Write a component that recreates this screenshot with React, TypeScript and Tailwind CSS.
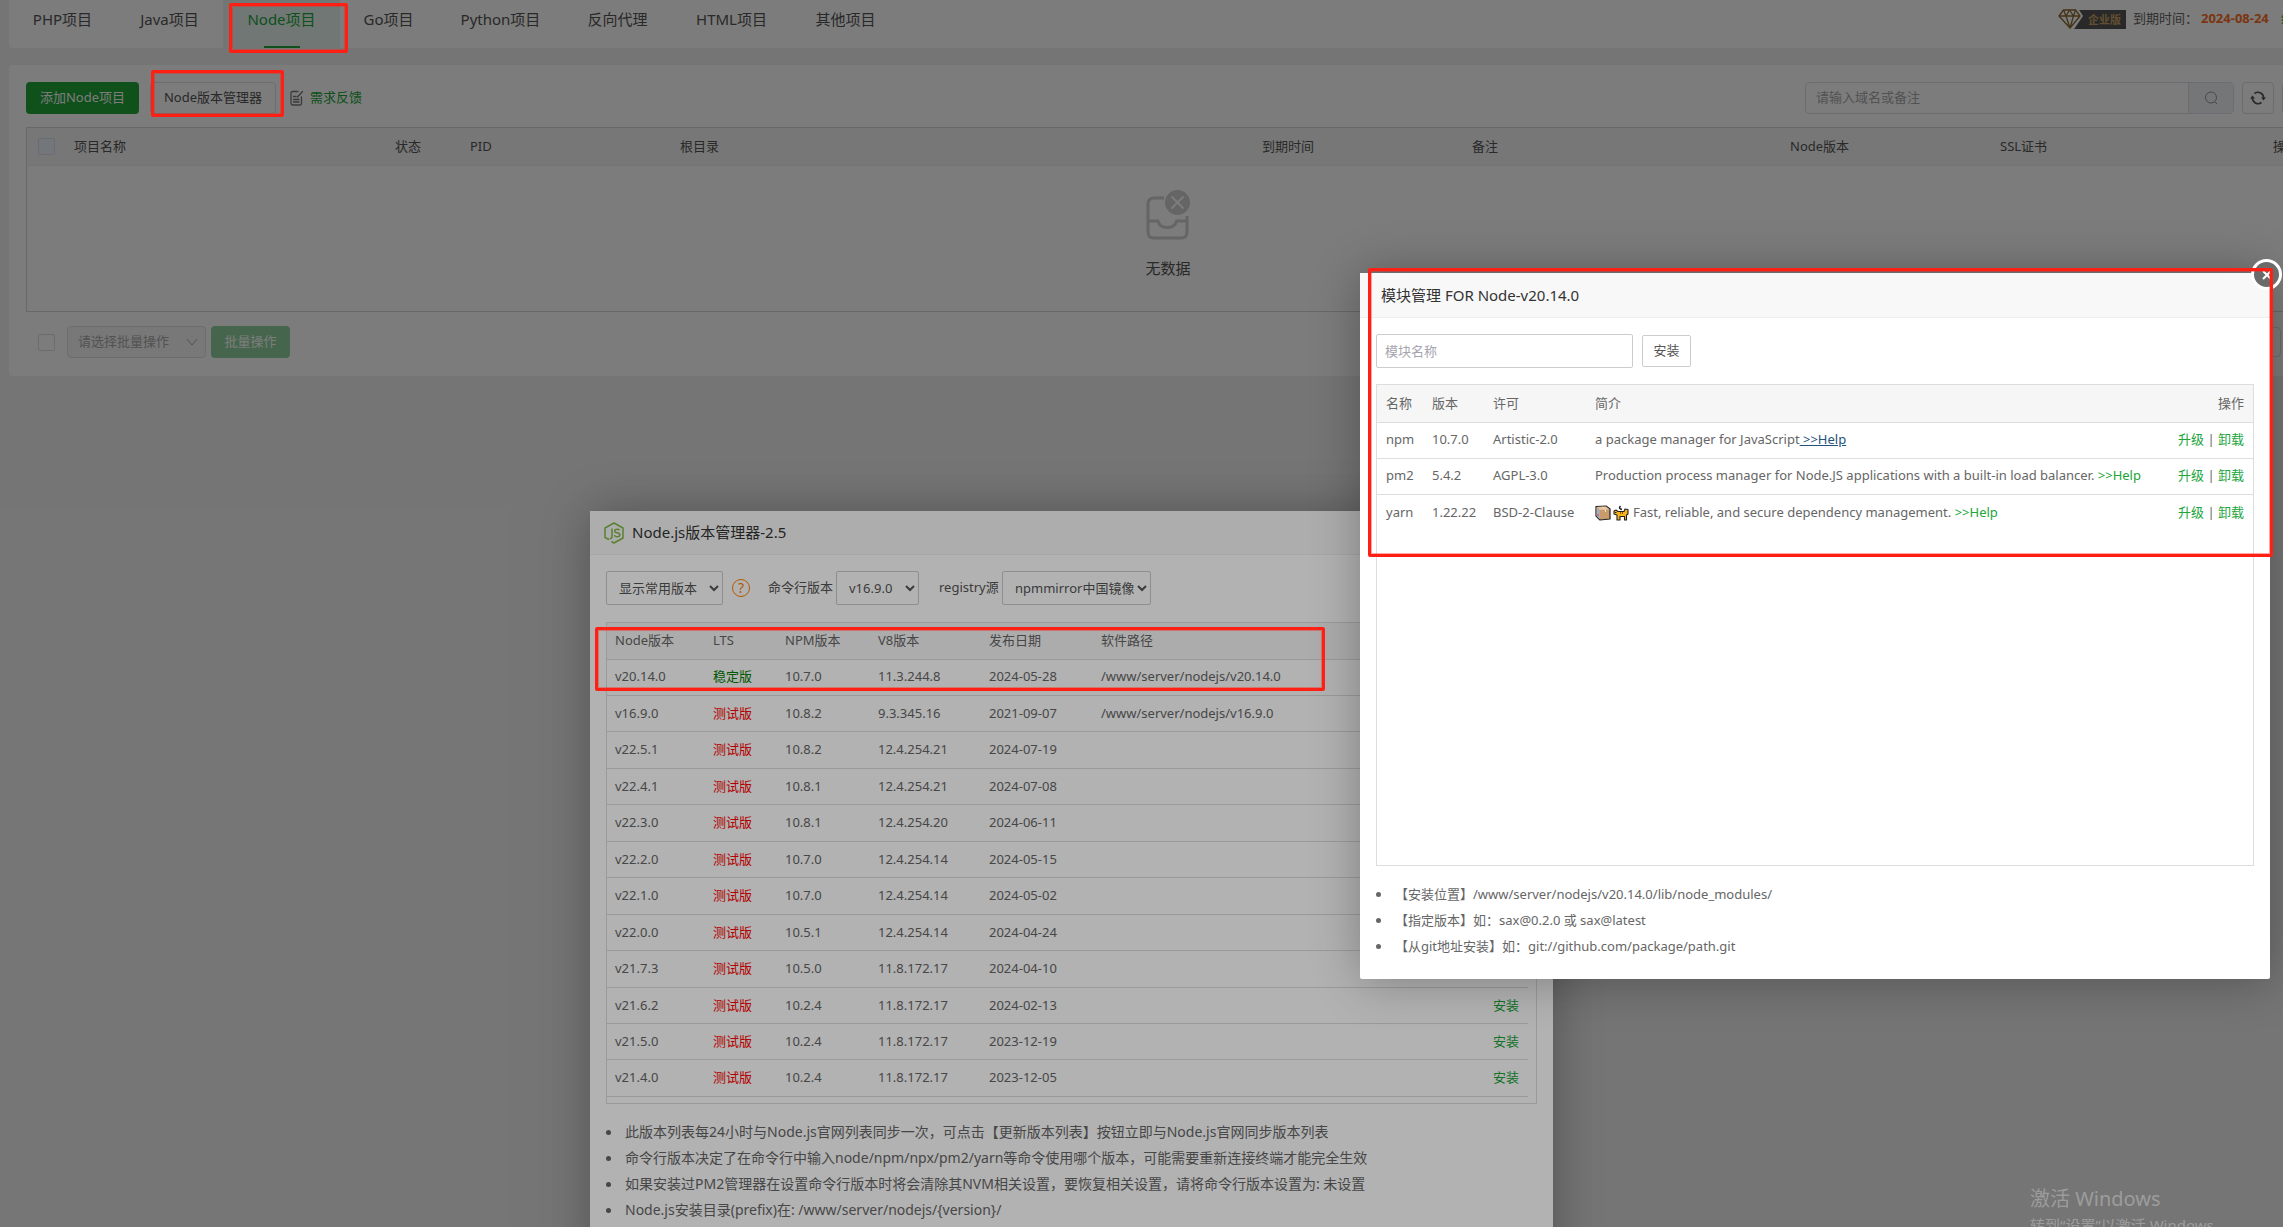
const tabs = [
  { name: 'PHP项目', w: 'w-[107px]' },
  { name: 'Java项目', w: 'w-[107px]' },
  { name: 'Node项目', w: 'w-[117px]', active: true },
  { name: 'Go项目', w: 'w-[97px]' },
  { name: 'Python项目', w: 'w-[127px]' },
  { name: '反向代理', w: 'w-[107px]' },
  { name: 'HTML项目', w: 'w-[121px]' },
  { name: '其他项目', w: 'w-[107px]' },
]

const versions = [
  { v: 'v20.14.0', lts: true, npm: '10.7.0', v8: '11.3.244.8', date: '2024-05-28', path: '/www/server/nodejs/v20.14.0', installed: true },
  { v: 'v16.9.0', npm: '10.8.2', v8: '9.3.345.16', date: '2021-09-07', path: '/www/server/nodejs/v16.9.0', installed: true },
  { v: 'v22.5.1', npm: '10.8.2', v8: '12.4.254.21', date: '2024-07-19' },
  { v: 'v22.4.1', npm: '10.8.1', v8: '12.4.254.21', date: '2024-07-08' },
  { v: 'v22.3.0', npm: '10.8.1', v8: '12.4.254.20', date: '2024-06-11' },
  { v: 'v22.2.0', npm: '10.7.0', v8: '12.4.254.14', date: '2024-05-15' },
  { v: 'v22.1.0', npm: '10.7.0', v8: '12.4.254.14', date: '2024-05-02' },
  { v: 'v22.0.0', npm: '10.5.1', v8: '12.4.254.14', date: '2024-04-24' },
  { v: 'v21.7.3', npm: '10.5.0', v8: '11.8.172.17', date: '2024-04-10' },
  { v: 'v21.6.2', npm: '10.2.4', v8: '11.8.172.17', date: '2024-02-13' },
  { v: 'v21.5.0', npm: '10.2.4', v8: '11.8.172.17', date: '2023-12-19' },
  { v: 'v21.4.0', npm: '10.2.4', v8: '11.8.172.17', date: '2023-12-05' },
]

const modules = [
  { name: 'npm', version: '10.7.0', license: 'Artistic-2.0', desc: 'a package manager for JavaScript', hover: true },
  { name: 'pm2', version: '5.4.2', license: 'AGPL-3.0', desc: 'Production process manager for Node.JS applications with a built-in load balancer.' },
  { name: 'yarn', version: '1.22.22', license: 'BSD-2-Clause', desc: 'Fast, reliable, and secure dependency management.', emoji: true },
]

const managerNotes = [
  '此版本列表每24小时与Node.js官网列表同步一次，可点击【更新版本列表】按钮立即与Node.js官网同步版本列表',
  '命令行版本决定了在命令行中输入node/npm/npx/pm2/yarn等命令使用哪个版本，可能需要重新连接终端才能完全生效',
  '如果安装过PM2管理器在设置命令行版本时将会清除其NVM相关设置，要恢复相关设置，请将命令行版本设置为: 未设置',
  'Node.js安装目录(prefix)在: /www/server/nodejs/{version}/',
]

const moduleNotes = [
  '【安装位置】/www/server/nodejs/v20.14.0/lib/node_modules/',
  '【指定版本】如：sax@0.2.0 或 sax@latest',
  '【从git地址安装】如：git://github.com/package/path.git',
]

function DiamondIcon() {
  return (
    <svg viewBox="0 0 26 20" className="relative h-5 w-[26px]" fill="none" stroke="#8a6a2e" strokeWidth="1.3" strokeLinejoin="round">
      <path d="M15 0H20.500L25 7L16.500 19.500H12Z" fill="#fff" stroke="none" />
      <path d="M5.500 1H17.500L22 7L12 19L1 7Z" />
      <path d="M1 7H22M5.500 1L8 7L12 19M17.500 1L15.500 7L12 19M8 7L11.500 1L15.500 7" />
    </svg>
  )
}

function EmptyIcon() {
  return (
    <svg viewBox="0 0 46 50" className="h-[50px] w-[46px]" fill="none" stroke="#d0d0d0" strokeWidth="3" strokeLinejoin="round">
      <path d="M19 8H9Q3 8 3 14V42Q3 48 9 48H36Q42 48 42 42V26" />
      <path d="M3 31H13Q14.500 37.500 22.500 37.500Q30 37.500 31.500 31H42" />
      <circle cx="32.500" cy="12.500" r="12.500" fill="#d0d0d0" stroke="none" />
      <path d="M26.500 6.500L38.500 18.500M38.500 6.500L26.500 18.500" stroke="#fff" strokeWidth="2" />
    </svg>
  )
}

function FeedbackIcon() {
  return (
    <svg viewBox="0 0 14 16" className="ml-3.5 h-4 w-3.5" fill="none" stroke="#777" strokeWidth="1.3" strokeLinecap="round">
      <path d="M8 1.500H2.500Q1 1.500 1 3V13.500Q1 15 2.500 15H10Q11.500 15 11.500 13.500V7" />
      <path d="M3.500 6.500H6M3.500 9.500H9M3.500 12H9M7.500 7L12.500 1.500" />
    </svg>
  )
}

function SearchIcon() {
  return (
    <svg viewBox="0 0 14 14" className="h-3.5 w-3.5" fill="none" stroke="#909399" strokeWidth="1">
      <circle cx="7" cy="6.500" r="5.500" />
      <path d="M10.500 10.500L13 13" />
    </svg>
  )
}

function RefreshIcon() {
  return (
    <svg viewBox="0 0 16 14" className="h-3.5 w-4" fill="none" stroke="#555" strokeWidth="1.6">
      <path d="M4.500 2.500A5.700 5.700 0 0 1 13.600 7.500M11.500 11.500A5.700 5.700 0 0 1 2.400 6.500" />
      <path d="M11 6.500H16L13.500 9.500ZM0 7.500H5L2.500 4.500Z" fill="#555" stroke="none" />
    </svg>
  )
}

function NodeIcon() {
  return (
    <svg viewBox="0 0 20 22" className="h-[22px] w-5" fill="none" stroke="#83b947" strokeWidth="1.5" strokeLinejoin="round">
      <path d="M5 17.500L1 15.500V6L10 1L19 6V16L10 21L7.500 19.500" />
      <path d="M8 6.500V14.500Q8 17 5.500 16.500M15.500 8.200Q15 7.200 13 7.200Q10.800 7.200 10.800 9Q10.800 10.500 13 10.700Q15.800 11 15.800 12.800Q15.800 14.800 13.200 14.800Q10.800 14.800 10.500 13" />
    </svg>
  )
}

function BoxEmoji() {
  return (
    <svg viewBox="0 0 16 16" className="inline-block h-4 w-4" strokeLinejoin="round">
      <path d="M1 1.500L11 1L15 4V14L5 15L1 11Z" fill="#c99a6b" stroke="#222" strokeWidth="1.2" />
      <path d="M1.500 2L5 5V14.500L1.500 11Z" fill="#a9abb5" />
      <path d="M2 2L11 1.500L14.500 4.500L5 5Z" fill="#e3c19b" />
      <path d="M7 2L10.500 4.500V7" stroke="#f3dfc6" fill="none" />
      <path d="M3 9V11" stroke="#d8404f" />
    </svg>
  )
}

function CatEmoji() {
  return (
    <svg viewBox="0 0 16 16" className="inline-block h-4 w-4" strokeLinejoin="round">
      <path d="M9 4.500Q5 3.500 7.500 1" fill="none" stroke="#222" strokeWidth="1.5" />
      <path d="M1 6L3 5L5 6.500H11L12 4L15 4.500V9L13.500 10V15H11.500V11.500H7V15H4V10L1 9Z" fill="#f8b41c" stroke="#222" strokeWidth="1.100" />
      <path d="M7.500 7V9M9.500 7V9" stroke="#8a5a00" />
      <path d="M2 7.500H3.500" stroke="#222" />
    </svg>
  )
}

function Checkbox({ label, filled }: { label: string; filled?: boolean }) {
  return (
    <input
      type="checkbox"
      aria-label={label}
      className={`block h-[17px] w-[17px] appearance-none rounded-xs border border-[#dcdfe6] ${filled ? 'bg-[#edf2fc]' : 'bg-white'}`}
    />
  )
}

function Notes({ items }: { items: string[] }) {
  return (
    <ul className="mt-[15px] leading-[26px]">
      {items.map(n => (
        <li key={n} className="flex items-center before:mr-3.5 before:h-[5px] before:w-[5px] before:rounded-full before:bg-current">
          {n}
        </li>
      ))}
    </ul>
  )
}

function ProjectPage() {
  return (
    <div className="w-[calc(100%+44px)] pl-[9px]">
      <header className="flex h-12 items-start rounded-b bg-white">
        <nav className="flex">
          {tabs.map(t => (
            <button
              key={t.name}
              className={`relative h-12 pb-2.5 text-[15px] leading-[38px] ${t.w} ${t.active ? 'bg-[#e9f5f1] text-[#20a53a]' : 'text-[#555]'}`}
            >
              {t.name}
              {t.active && <span className="absolute bottom-0 left-1/2 h-0.5 w-9 -translate-x-1/2 bg-[#20a53a]" />}
            </button>
          ))}
        </nav>
        <div className="ml-auto flex h-[38px] items-center pr-5 text-[13px] text-[#666]">
          <DiamondIcon />
          <span className="-ml-2.5 mr-[7px] h-[19px] w-[52px] bg-[#555] pl-3.5 text-[11px] leading-[19px] font-bold text-[#c9a468]">企业版</span>
          <span className="w-[68px]">到期时间：</span>
          <span className="w-20 font-bold text-[#fc6d26]">2024-08-24</span>
          <a href="#" className="text-[#20a53a]">续费</a>
        </div>
      </header>

      <main className="mt-[17px] h-[311px] rounded bg-white px-[17px] pt-[17px]">
        <div className="flex h-8 items-center text-[13px]">
          <button className="h-8 w-[113px] rounded bg-[#20a53a] text-white">添加Node项目</button>
          <button className="ml-[11px] h-8 w-[126px] rounded border border-[#dcdfe6] text-[#555]">Node版本管理器</button>
          <FeedbackIcon />
          <a href="#" className="ml-1.5 text-[#20a53a]">需求反馈</a>
          <form className="ml-auto flex h-8 w-[429px] rounded border border-[#dcdfe6]">
            <input
              aria-label="搜索"
              placeholder="请输入域名或备注"
              className="min-w-0 flex-1 px-2.5 placeholder:text-[#aaa]"
            />
            <button type="button" aria-label="查询" className="flex w-[45px] items-center justify-center border-l border-[#dcdfe6] bg-[#f1f3f8]">
              <SearchIcon />
            </button>
          </form>
          <button aria-label="刷新" className="ml-2 flex h-8 w-8 items-center justify-center rounded border border-[#dcdfe6]">
            <RefreshIcon />
          </button>
          <button aria-label="设置" className="ml-2 h-8 w-7 rounded border border-[#dcdfe6]" />
        </div>

        <div className="mt-[13px] h-[185px] border border-[#d4d6da] text-[13px]">
          <table className="w-full table-fixed text-left text-[#555]">
            <thead>
              <tr className="h-[37px] border-b border-[#ebeef5] bg-[#f5f5f5]">
                <th className="w-[47px] pl-[11px]"><Checkbox label="全选" filled /></th>
                <th className="w-[321px] font-normal">项目名称</th>
                <th className="w-[75px] font-normal">状态</th>
                <th className="w-[210px] font-normal">PID</th>
                <th className="w-[582px] font-normal">根目录</th>
                <th className="w-[210px] font-normal">到期时间</th>
                <th className="w-[318px] font-normal">备注</th>
                <th className="w-[210px] font-normal">Node版本</th>
                <th className="font-normal">SSL证书</th>
                <th className="w-9 font-normal">操作</th>
              </tr>
            </thead>
          </table>
          <div className="flex flex-col items-center pt-6 text-[15px] text-[#555]">
            <EmptyIcon />
            <p className="mt-4 leading-6">无数据</p>
          </div>
        </div>

        <div className="mt-3.5 flex h-8 items-center pl-3 text-[13px]">
          <Checkbox label="选择全部" />
          <div className="relative ml-3">
            <select
              aria-label="批量操作"
              disabled
              className="h-8 w-[139px] appearance-none rounded border border-[#dcdfe6] bg-[#f8f8f8] pl-2.5 text-[#aaa]"
            >
              <option>请选择批量操作</option>
            </select>
            <svg viewBox="0 0 12 8" className="absolute top-3 right-2 h-2 w-3" fill="none" stroke="#aaa">
              <path d="M1 1L6 7L11 1" />
            </svg>
          </div>
          <button disabled className="ml-[5px] h-8 w-[79px] rounded bg-[#90d29d] text-white">批量操作</button>
          <button aria-label="下一页" className="mr-[29px] ml-auto h-[30px] w-[90px] rounded border border-[#dcdfe6]" />
        </div>
      </main>
    </div>
  )
}

function VersionManager() {
  return (
    <section className="absolute top-[511px] left-[590px] h-[760px] w-[963px] rounded-xs bg-white text-[13px] text-[#666] shadow-[1px_1px_50px_rgba(0,0,0,0.3)]">
      <header className="flex h-11 items-center gap-2 border-b border-[#eee] bg-[#f8f8f8] pl-3.5 text-[15px] text-[#333]">
        <NodeIcon />
        <h2>Node.js版本管理器-2.5</h2>
      </header>
      <div className="px-4 pt-4">
        <div className="flex h-[34px] items-center text-[#555]">
          <select aria-label="显示版本" className="h-[34px] w-[117px] rounded-xs border border-[#ccc] pl-2">
            <option>显示常用版本</option>
          </select>
          <span className="ml-[9px] flex h-[18px] w-[18px] items-center justify-center rounded-full border border-[#ff8000] text-[14px] leading-none text-[#ff8000]">?</span>
          <label htmlFor="cli" className="ml-[18px] w-[68px]">命令行版本</label>
          <select id="cli" className="h-[34px] w-[83px] rounded-xs border border-[#ccc] pl-2">
            <option>v16.9.0</option>
          </select>
          <label htmlFor="registry" className="ml-5 w-[63px] whitespace-nowrap">registry源</label>
          <select id="registry" className="h-[34px] w-[149px] rounded-xs border border-[#ccc] pl-2">
            <option>npmmirror中国镜像</option>
          </select>
        </div>

        <div className="mt-[17px] h-[482px] border border-[#ddd] pr-2">
          <table className="h-[474px] w-full table-fixed text-left">
            <thead>
              <tr className="h-[36px] border-b border-[#ddd] bg-[#f6f6f6]">
                <th className="w-[98px] pl-2 font-normal">Node版本</th>
                <th className="w-[72px] pl-2 font-normal">LTS</th>
                <th className="w-[93px] pl-2 font-normal">NPM版本</th>
                <th className="w-[111px] pl-2 font-normal">V8版本</th>
                <th className="w-[112px] pl-2 font-normal">发布日期</th>
                <th className="pl-2 font-normal">软件路径</th>
                <th className="w-[120px] pr-[9px] text-right font-normal">操作</th>
              </tr>
            </thead>
            <tbody>
              {versions.map(r => (
                <tr key={r.v} className="border-b border-[#ddd]">
                  <td className="pl-2">{r.v}</td>
                  <td className={r.lts ? 'pl-2 text-[#008000]' : 'pl-2 text-[#ff0000]'}>{r.lts ? '稳定版' : '测试版'}</td>
                  <td className="pl-2">{r.npm}</td>
                  <td className="pl-2">{r.v8}</td>
                  <td className="pl-2">{r.date}</td>
                  <td className="pl-2">{r.path}</td>
                  <td className="pr-[9px] text-right">
                    <a href="#" className="text-[#20a53a]">{r.installed ? '卸载' : '安装'}</a>
                  </td>
                </tr>
              ))}
            </tbody>
          </table>
        </div>

        <div className="text-[14px]">
          <Notes items={managerNotes} />
        </div>
      </div>
    </section>
  )
}

function ModuleManager() {
  return (
    <section className="absolute top-[273px] left-[1360px] h-[706px] w-[910px] rounded-xs bg-white text-[13px] text-[#666] shadow-[1px_1px_50px_rgba(0,0,0,0.3)]">
      <header className="flex h-[45px] items-center border-b border-[#eee] bg-[#f8f8f8] pl-[21px] text-[15px] text-[#333]">
        <h2>模块管理 FOR Node-v20.14.0</h2>
      </header>
      <button aria-label="关闭" className="absolute -top-3.5 -right-3 flex h-[31px] w-[31px] items-center justify-center rounded-full border-3 border-white bg-[#6b6b6b]">
        <svg viewBox="0 0 10 10" className="h-2.5 w-2.5" stroke="#fff" strokeWidth="2">
          <path d="M1 1L9 9M9 1L1 9" />
        </svg>
      </button>
      <div className="px-4 pt-4">
        <form className="flex h-[34px] items-center gap-[9px]">
          <input
            aria-label="模块名称"
            placeholder="模块名称"
            className="h-[34px] w-[257px] rounded-xs border border-[#ccc] px-2 placeholder:text-[#a5a5ad]"
          />
          <button type="button" className="h-8 w-[49px] rounded-xs border border-[#ccc] text-[#555]">安装</button>
        </form>

        <div className="mt-4 h-[482px] border border-[#ddd]">
          <table className="w-full table-fixed text-left">
            <thead>
              <tr className="h-[37px] border-b border-[#ddd] bg-[#f6f6f6]">
                <th className="w-[46px] pl-[9px] font-normal">名称</th>
                <th className="w-[61px] pl-[9px] font-normal">版本</th>
                <th className="w-[102px] pl-[9px] font-normal">许可</th>
                <th className="pl-[9px] font-normal">简介</th>
                <th className="w-[90px] pr-[9px] text-right font-normal">操作</th>
              </tr>
            </thead>
            <tbody>
              {modules.map(m => (
                <tr key={m.name} className="h-[36px] border-b border-[#ddd] last:border-b-0">
                  <td className="pl-[9px]">{m.name}</td>
                  <td className="pl-[9px]">{m.version}</td>
                  <td className="pl-[9px] whitespace-nowrap">{m.license}</td>
                  <td className="pl-[9px] whitespace-nowrap">
                    {m.emoji && <span className="mr-1 inline-flex gap-0.5 align-text-bottom"><BoxEmoji /><CatEmoji /></span>}
                    {m.desc}
                    {m.hover
                      ? <a href="#" className="whitespace-pre text-[#23527c] underline"> &gt;&gt;Help</a>
                      : <a href="#" className="whitespace-pre text-[#20a53a]"> &gt;&gt;Help</a>}
                  </td>
                  <td className="pr-[9px] text-right whitespace-nowrap">
                    <a href="#" className="text-[#20a53a]">升级</a> | <a href="#" className="text-[#20a53a]">卸载</a>
                  </td>
                </tr>
              ))}
            </tbody>
          </table>
        </div>

        <Notes items={moduleNotes} />
      </div>
    </section>
  )
}

export default function App() {
  return (
    <div className="relative h-screen overflow-hidden bg-[#f1f1f1] font-['Noto_Sans','Noto_Sans_CJK_SC',sans-serif]">
      <ProjectPage />
      <div className="absolute inset-0 bg-black/30" />
      <VersionManager />
      <div className="absolute inset-0 bg-black/30" />
      <ModuleManager />

      {/* system watermark */}
      <div className="absolute top-[1185px] left-[2030px] whitespace-nowrap text-white/30">
        <p className="text-[20px] leading-7">激活 Windows</p>
        <p className="text-[15px] leading-6">转到“设置”以激活 Windows。</p>
      </div>

      {/* red marks */}
      <div className="absolute top-[3px] left-[229px] h-[50px] w-[119px] rounded-xs border-3 border-[#ff2015] shadow-[inset_0_0_0_1px_rgba(255,32,21,0.4)]" />
      <div className="absolute top-[70px] left-[151px] h-[47px] w-[133px] rounded-xs border-3 border-[#ff2015] shadow-[inset_0_0_0_1px_rgba(255,32,21,0.4)]" />
      <div className="absolute top-[627px] left-[595px] h-[64px] w-[730px] rounded-xs border-3 border-[#ff2015] shadow-[inset_0_0_0_1px_rgba(255,32,21,0.4)]" />
      <div className="absolute top-[268px] left-[1368px] h-[289px] w-[905px] rounded-xs border-3 border-[#ff2015] shadow-[inset_0_0_0_1px_rgba(255,32,21,0.4)]" />
    </div>
  )
}
